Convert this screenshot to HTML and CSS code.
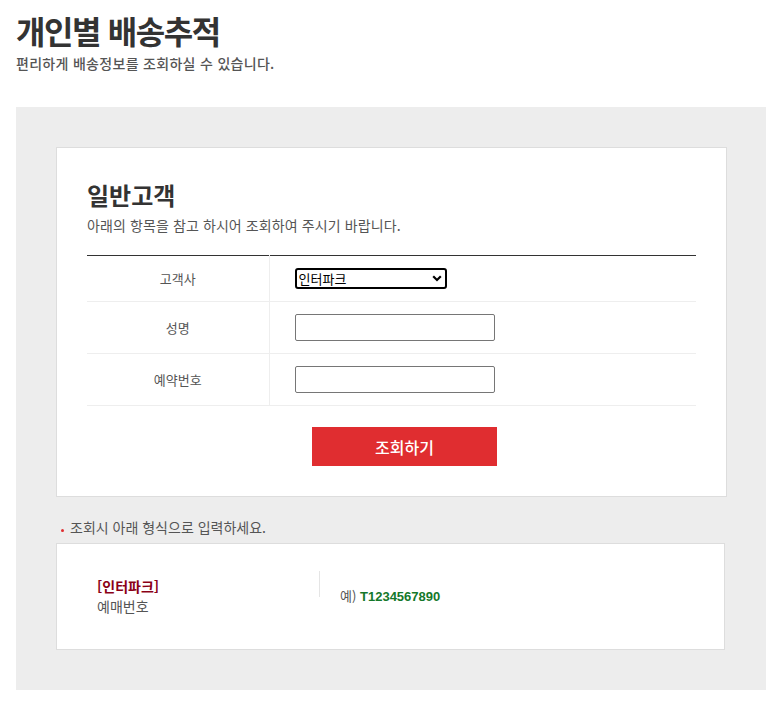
FILE: index.html
```html
<!DOCTYPE html>
<html lang="ko">
<head>
<meta charset="utf-8">
<title>개인별 배송추적</title>
<link rel="stylesheet" href="styles.css">
</head>
<body>
<header class="page-head">
  <h1 class="page-title">개인별 배송추적</h1>
  <p class="page-sub">편리하게 배송정보를 조회하실 수 있습니다.</p>
</header>
<main class="panel">
  <section class="card">
    <h2 class="card-title">일반고객</h2>
    <p class="card-desc">아래의 항목을 참고 하시어 조회하여 주시기 바랍니다.</p>
    <table class="form-table">
      <tr class="row-first">
        <th>고객사</th>
        <td>
          <div class="select">
            <span class="select-text">인터파크</span>
            <svg class="select-arrow" width="10" height="7" viewBox="0 0 10 7"><path d="M1.2 1.3 L5 5 L8.8 1.3" fill="none" stroke="#000" stroke-width="2.2"/></svg>
          </div>
        </td>
      </tr>
      <tr>
        <th>성명</th>
        <td><input class="text-input" type="text"></td>
      </tr>
      <tr>
        <th>예약번호</th>
        <td><input class="text-input" type="text"></td>
      </tr>
    </table>
    <div class="actions">
      <button class="btn-search" type="button">조회하기</button>
    </div>
  </section>
  <p class="note"><span class="dot"></span>조회시 아래 형식으로 입력하세요.</p>
  <section class="card card-example">
    <div class="example-row">
      <div class="example-label">
        <span class="brand">[인터파크]</span>
        <span class="label-text">예매번호</span>
      </div>
      <div class="example-divider"></div>
      <div class="example-value">예) <b class="code">T1234567890</b></div>
    </div>
  </section>
</main>
</body>
</html>
```
FILE: styles.css
```css
* { box-sizing: border-box; }
html, body { margin: 0; padding: 0; background: #fff; }
body {
  font-family: "Noto Sans CJK KR", "Noto Sans", sans-serif;
  color: #555;
  padding: 0 18px 0 16px;
}
.page-head { padding-top: 7px; }
.page-title {
  margin: 0;
  font-size: 32px;
  line-height: 46px;
  font-weight: 700;
  color: #333;
  letter-spacing: -1.4px;
}
.page-sub {
  margin: 0;
  font-size: 14px;
  line-height: 21px;
  color: #555;
  font-weight: 500;
  letter-spacing: 0.3px;
}
.panel {
  margin-top: 33px;
  width: 750px;
  background: #ededed;
  padding: 40px 39px 40px 40px;
}
.card {
  background: #fff;
  border: 1px solid #ddd;
  padding: 30px 30px 30px 30px;
}
.card-title {
  margin: 0;
  font-size: 24px;
  line-height: 34px;
  font-weight: 700;
  color: #333;
}
.card-desc {
  margin: 3px 0 0;
  font-size: 14px;
  line-height: 20px;
  color: #555;
  letter-spacing: 0.1px;
}
.form-table {
  margin-top: 20px;
  width: 100%;
  border-collapse: collapse;
  border-top: 1px solid #333;
}
.form-table th {
  width: 182px;
  font-weight: 400;
  font-size: 13px;
  color: #555;
  text-align: center;
  border-right: 1px solid #eee;
  border-bottom: 1px solid #eee;
  padding: 0;
}
.form-table td {
  border-bottom: 1px solid #eee;
  padding: 12px 0 12px 25px;
}
.select {
  width: 152px;
  height: 21px;
  border: 2px solid #000;
  border-radius: 3px;
  display: flex;
  align-items: center;
  justify-content: space-between;
  padding: 0 3px 0 2px;
}
.select-text {
  font-size: 13px;
  color: #000;
  line-height: 17px;
}
.text-input {
  display: block;
  width: 200px;
  height: 27px;
  border: 1px solid #767676;
  border-radius: 2px;
  margin: 0;
  padding: 0 4px;
  background: #fff;
}
.actions { padding: 21px 0 0 225px; }
.btn-search {
  width: 185px;
  height: 39px;
  border: 0;
  background: #e02d30;
  color: #fff;
  font-family: "Noto Sans CJK KR", sans-serif;
  font-size: 16px;
  font-weight: 500;
  padding: 0;
}
.note {
  margin: 0;
  padding: 20px 0 6px 3px;
  font-size: 14px;
  line-height: 20px;
  color: #555;
  display: flex;
  align-items: center;
}
.dot {
  width: 3px;
  height: 3px;
  background: #e02d30;
  border-radius: 50%;
  margin: 6px 6px 0 2px;
}
.card-example {
  width: 669px;
  padding: 27px 0 33px 40px;
}
.example-row { display: flex; align-items: flex-start; }
.example-label {
  width: 222px;
  padding-top: 5px;
  display: flex;
  flex-direction: column;
  font-size: 14px;
  line-height: 20px;
}
.brand { color: #8b0016; font-weight: 700; }
.label-text { color: #555; }
.example-divider {
  width: 1px;
  height: 26px;
  background: #e5e5e5;
}
.example-value {
  margin: 17px 0 0 20px;
  font-size: 13px;
  line-height: 16px;
  color: #555;
}
.code {
  color: #14782a;
  font-family: "Liberation Sans", Arial, sans-serif;
  font-size: 13px;
  font-weight: 700;
}
```
